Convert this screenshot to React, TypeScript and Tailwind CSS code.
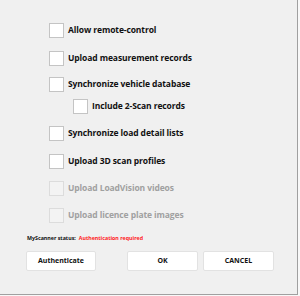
import React from 'react'

interface Option {
  label: string
  top: string
  indent?: boolean
  disabled?: boolean
}

const options: Option[] = [
  { label: 'Allow remote-control', top: 'mt-[23px]' },
  { label: 'Upload measurement records', top: 'mt-[13px]' },
  { label: 'Synchronize vehicle database', top: 'mt-[11px]' },
  { label: 'Include 2-Scan records', top: 'mt-[7px]', indent: true },
  { label: 'Synchronize load detail lists', top: 'mt-[12px]' },
  { label: 'Upload 3D scan profiles', top: 'mt-[13px]' },
  { label: 'Upload LoadVision videos', top: 'mt-[12px]', disabled: true },
  { label: 'Upload licence plate images', top: 'mt-[12px]', disabled: true },
]

function CheckRow({ label, top, indent, disabled }: Option) {
  return (
    <label className={`flex items-center h-[15px] ${top} ${indent ? 'ml-[73px]' : 'ml-[49px]'}`}>
      <span
        className={`w-[15px] h-[15px] border ${
          disabled ? 'bg-[#f3f3f3] border-[#dcdcdc]' : 'bg-white border-[#c4c4c4]'
        }`}
      />
      <span
        className={`ml-[4px] text-[8.5px] font-bold leading-none tracking-[-0.1px] ${
          disabled ? 'text-[#a0a0a0]' : 'text-[#111]'
        }`}
      >
        {label}
      </span>
    </label>
  )
}

function DialogButton({ children, width }: { children: React.ReactNode; width: string }) {
  return (
    <button
      className={`h-[20px] ${width} bg-white border border-[#e2e2e2] rounded-[2px] text-[7px] font-bold text-[#111]`}
    >
      {children}
    </button>
  )
}

export default function App() {
  return (
    <div className="w-[300px] h-[296px] bg-[#f8f8f8]" style={{ fontFamily: '"Open Sans", Lato, sans-serif' }}>
      <div className="w-[298px] h-[295px] bg-[#f0f0f0] border-r border-b border-[#a0a0a0] flex flex-col">
        {options.map((o) => (
          <CheckRow key={o.label} {...o} />
        ))}

        <div className="mt-[13px] ml-[27px] flex items-center text-[5.3px] font-bold leading-none">
          <span className="text-[#111]">MyScanner status:</span>
          <span className="ml-[3px] text-[#ff2020]">Authentication required</span>
        </div>

        <div className="mt-[10px] ml-[26px] flex">
          <DialogButton width="w-[70px]">Authenticate</DialogButton>
          <div className="ml-[31px] flex gap-[5px]">
            <DialogButton width="w-[71px]">OK</DialogButton>
            <DialogButton width="w-[71px]">CANCEL</DialogButton>
          </div>
        </div>
      </div>
    </div>
  )
}
